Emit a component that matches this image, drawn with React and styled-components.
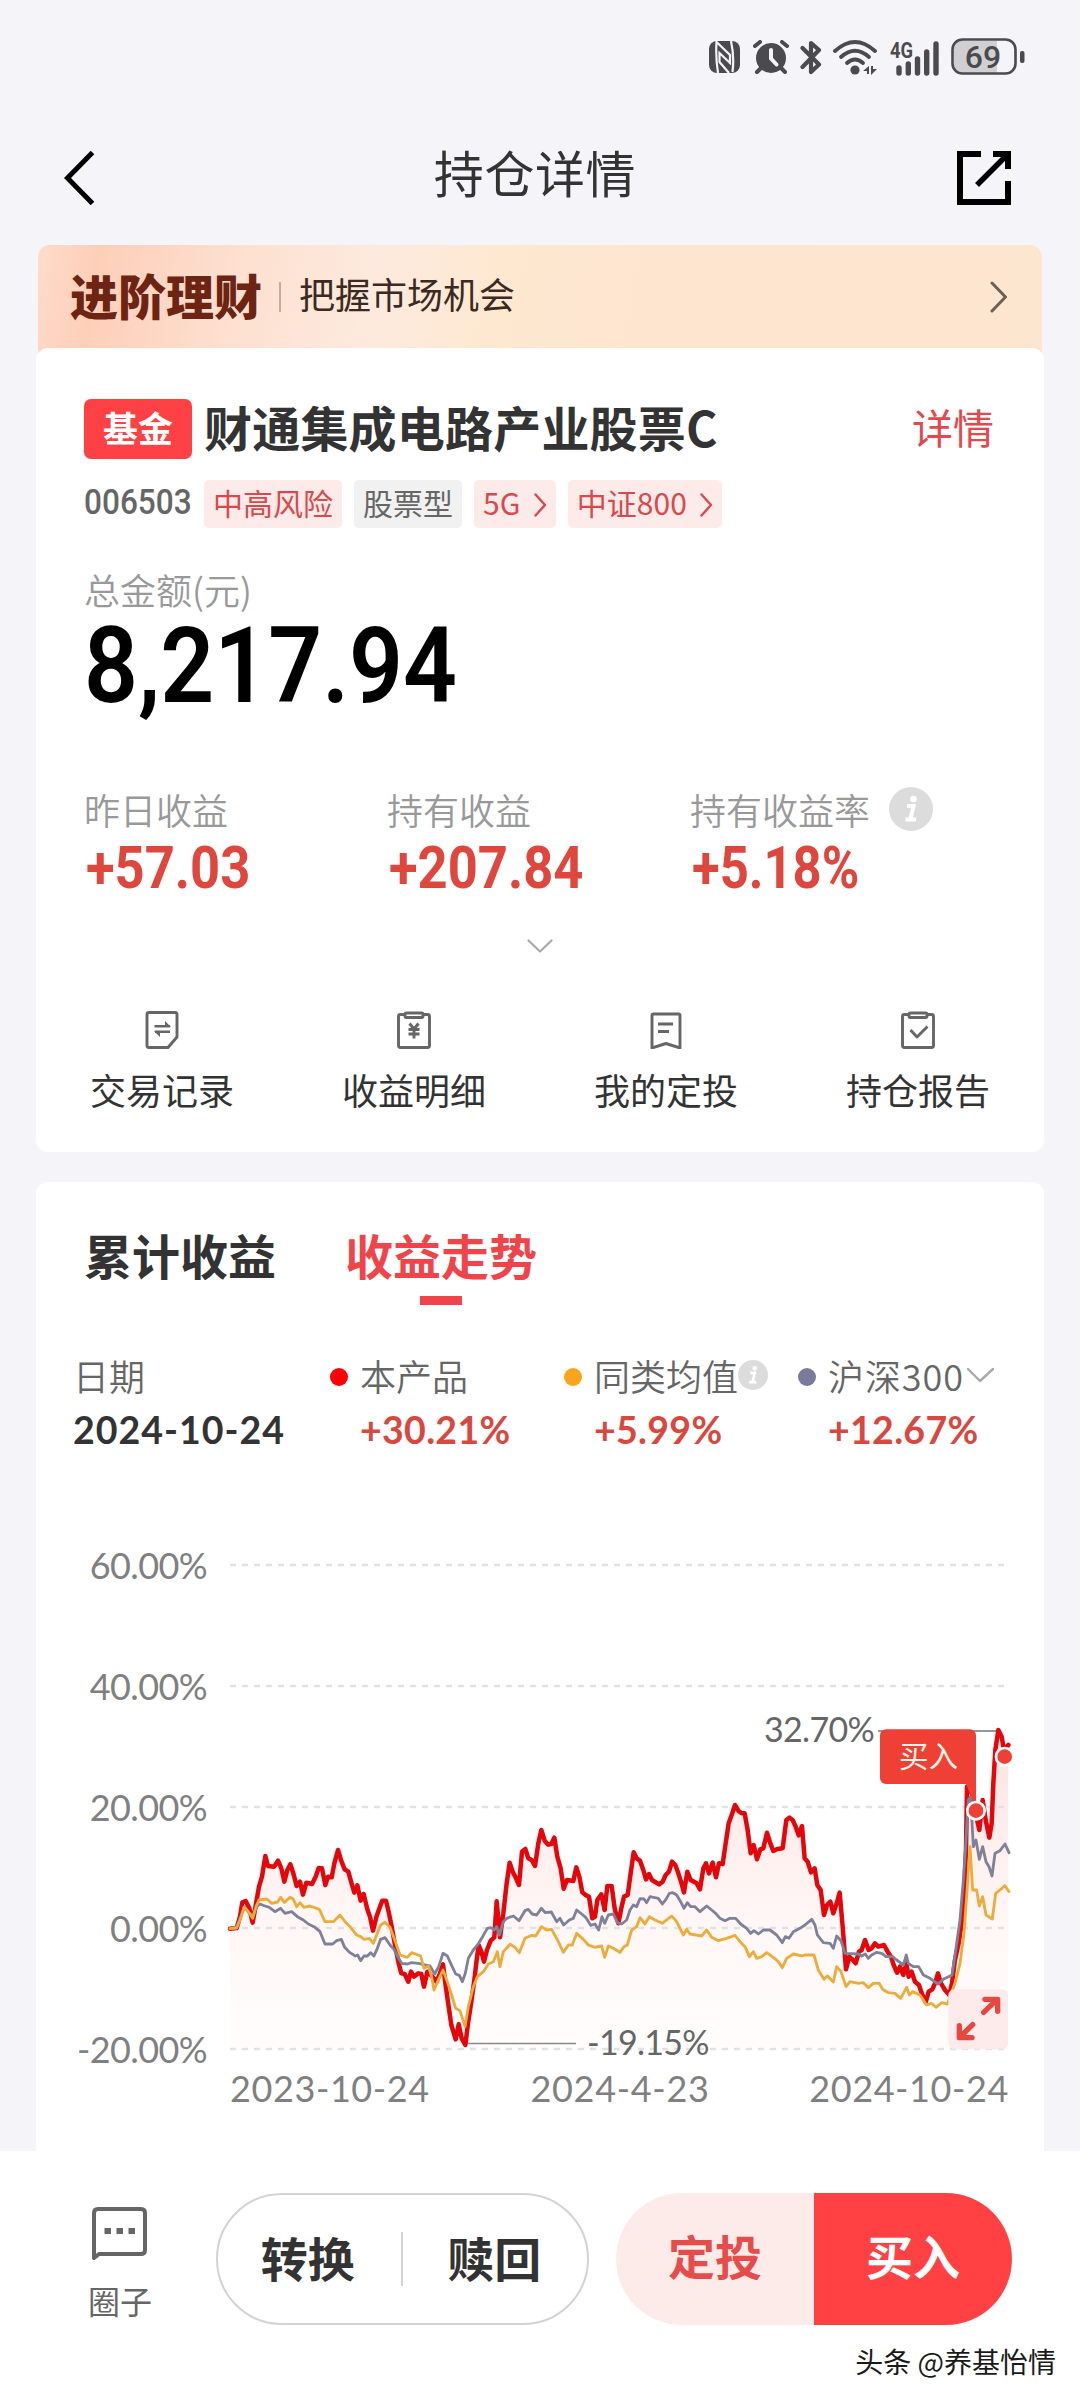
import React, { useState } from "react";
import styled, { createGlobalStyle } from "styled-components";

const RED_LINE =
  "60,686 80,684 90,650 97,607 107,603 118,625 128,668 140,600 147,560 156,530 166,468 174,498 192,500 204,482 214,505 223,545 232,510 241,493 250,520 260,558 270,545 279,584 289,548 306,552 317,530 326,504 336,505 346,555 354,530 365,532 373,490 384,450 393,480 404,508 415,515 424,548 433,578 442,556 452,602 461,582 472,628 480,650 489,692 500,648 510,620 517,602 528,602 537,640 545,680 556,740 566,790 574,820 584,822 595,845 603,815 612,830 625,820 634,822 642,860 652,815 665,828 680,845 690,820 699,793 706,850 716,920 724,975 737,1018 746,973 755,1015 766,1035 774,970 784,905 793,840 800,780 806,735 814,755 822,785 831,750 842,722 853,712 860,604 870,712 880,640 890,550 899,488 908,515 918,535 927,555 936,455 946,447 955,475 965,480 975,498 985,430 994,390 1004,422 1014,434 1024,432 1033,413 1042,470 1052,505 1061,566 1071,540 1090,543 1099,502 1108,530 1117,577 1127,585 1137,590 1147,655 1155,650 1162,600 1174,583 1184,630 1192,558 1205,558 1214,625 1225,670 1235,620 1242,590 1253,585 1262,520 1271,457 1280,475 1290,482 1300,510 1308,538 1317,522 1326,540 1347,553 1358,545 1367,525 1377,515 1386,485 1396,495 1405,520 1413,545 1422,577 1432,515 1442,540 1460,550 1470,568 1480,505 1488,490 1497,520 1508,488 1518,532 1527,490 1538,492 1547,430 1556,370 1565,345 1575,315 1585,332 1595,340 1604,340 1613,390 1622,460 1631,435 1641,478 1651,448 1660,445 1671,398 1681,430 1690,453 1702,447 1718,445 1729,360 1738,353 1748,360 1757,380 1766,406 1776,378 1784,475 1793,485 1803,517 1814,505 1822,555 1832,570 1842,645 1851,615 1861,605 1870,640 1880,610 1889,578 1898,680 1908,808 1918,770 1927,778 1937,790 1947,755 1955,750 1965,720 1976,750 1985,745 1995,730 2005,740 2022,735 2033,755 2043,770 2051,795 2061,818 2070,800 2080,825 2089,790 2096,830 2105,815 2115,845 2127,855 2137,885 2147,907 2156,875 2167,868 2175,850 2184,820 2193,850 2205,870 2218,885 2226,850 2235,780 2246,730 2255,670 2263,570 2268,450 2271,260 2280,270 2290,290 2297,340 2308,390 2318,300 2327,360 2338,413 2345,370 2350,250 2356,150 2365,90 2375,110 2382,150 2395,135";

const BLUE_LINE =
  "60,686 80,680 92,650 104,620 118,640 130,645 140,620 150,612 165,618 178,622 195,635 212,625 225,640 245,635 262,650 280,660 295,672 315,682 330,695 345,732 368,732 380,722 394,718 404,742 420,758 436,768 443,765 452,782 462,768 472,768 482,758 492,768 502,745 512,718 525,713 540,735 552,748 562,768 575,790 592,792 605,788 625,790 645,795 660,798 674,822 686,800 699,760 712,768 722,790 737,822 748,826 757,845 766,820 775,775 790,750 806,730 818,710 832,685 843,683 852,690 860,680 868,705 880,665 890,655 910,648 927,662 945,632 955,628 966,642 980,645 994,625 1006,638 1024,636 1040,665 1050,655 1061,675 1078,660 1090,655 1100,630 1115,642 1127,652 1142,676 1155,672 1166,690 1176,650 1184,670 1195,645 1210,642 1222,668 1235,672 1250,660 1260,630 1270,615 1280,620 1290,596 1302,597 1310,608 1320,590 1345,595 1357,612 1368,598 1378,580 1388,578 1400,585 1412,605 1422,625 1432,608 1442,620 1455,620 1470,635 1490,618 1505,630 1517,640 1530,655 1545,662 1560,655 1577,655 1592,672 1610,685 1622,700 1632,692 1645,702 1660,690 1680,690 1700,705 1717,728 1726,710 1737,715 1750,695 1770,685 1785,675 1805,658 1815,675 1822,705 1840,728 1860,730 1870,745 1880,708 1893,722 1905,760 1945,762 1955,768 1966,762 1975,775 1985,765 2000,757 2015,760 2028,770 2048,770 2060,780 2080,795 2089,765 2095,790 2110,800 2126,800 2140,825 2160,835 2184,852 2200,838 2226,825 2235,765 2250,660 2260,540 2268,420 2275,300 2282,290 2290,440 2298,420 2308,478 2318,440 2328,485 2337,500 2346,528 2355,460 2370,452 2385,432 2397,458";

const ORANGE_LINE =
  "60,686 80,684 92,655 102,622 115,635 128,655 138,620 147,600 170,597 185,610 203,606 212,592 223,607 240,592 250,598 260,620 270,608 282,622 300,618 328,628 345,665 370,665 390,645 405,665 420,680 440,705 452,710 462,718 478,715 490,730 502,700 512,675 525,667 540,682 555,722 570,765 592,772 605,758 632,768 642,805 655,798 665,830 672,870 685,840 699,810 712,845 725,885 737,925 750,932 765,980 775,920 790,860 802,830 820,815 835,792 850,785 862,755 870,800 880,755 900,733 915,742 928,758 945,715 965,706 977,708 994,680 1010,690 1025,688 1045,725 1060,757 1075,735 1087,735 1100,700 1120,718 1135,735 1155,742 1175,738 1184,772 1195,738 1210,745 1230,757 1242,740 1252,735 1265,690 1280,680 1290,653 1305,672 1318,650 1335,660 1357,670 1370,660 1385,648 1400,665 1420,705 1430,688 1440,702 1475,708 1490,690 1505,712 1525,722 1550,715 1575,706 1590,725 1605,740 1618,770 1630,755 1640,775 1655,770 1670,758 1690,772 1705,785 1717,803 1730,775 1750,762 1775,768 1785,765 1812,765 1825,810 1842,838 1852,828 1870,846 1880,800 1893,815 1908,860 1920,845 1945,850 1960,848 1975,863 1990,850 2008,850 2018,868 2035,878 2055,880 2072,895 2090,862 2098,885 2108,875 2130,885 2150,915 2165,910 2178,922 2195,908 2212,912 2235,850 2250,790 2262,700 2272,560 2280,440 2288,570 2300,570 2308,618 2318,590 2328,645 2347,657 2357,580 2370,570 2385,557 2397,575";

const GRID = [
  { label: "60.00%", y: 115 },
  { label: "40.00%", y: 236 },
  { label: "20.00%", y: 357 },
  { label: "0.00%", y: 478 },
  { label: "-20.00%", y: 599 },
];

const STATS = [
  { label: "昨日收益", value: "+57.03" },
  { label: "持有收益", value: "+207.84" },
  { label: "持有收益率", value: "+5.18%", info: true },
];

const LEGEND = [
  { name: "本产品", value: "+30.21%", color: "#fb0007" },
  { name: "同类均值", value: "+5.99%", color: "#fba41c", info: true },
  { name: "沪深300", value: "+12.67%", color: "#7a7a9c", arrow: true },
];

const TABS = ["累计收益", "收益走势"];

const NfcIcon = () => (
  <svg width="31" height="32" viewBox="0 0 31 32">
    <rect width="31" height="32" rx="8" fill="#4b4b4f" />
    <path
      d="M9 32 Q6.500 16 7.500 1 L21 14 V22 L10.500 12 V21 L20 32"
      fill="none"
      stroke="#f4f4f9"
      strokeWidth="2.200"
    />
    <path d="M22 0 Q25.500 16 23.500 31" fill="none" stroke="#f4f4f9" strokeWidth="2.200" />
  </svg>
);

const AlarmIcon = () => (
  <svg width="36" height="34" viewBox="0 0 36 34">
    <circle cx="18" cy="18" r="15" fill="#4b4b4f" />
    <path
      d="M2 6 L7 2 M34 6 L29 2 M8 28 L4 32 M28 28 L32 32"
      stroke="#4b4b4f"
      strokeWidth="4"
      strokeLinecap="round"
    />
    <path
      d="M18 10 V18.500 L23.500 24.500"
      fill="none"
      stroke="#f4f4f9"
      strokeWidth="4"
      strokeLinecap="round"
    />
  </svg>
);

const BluetoothIcon = () => (
  <svg width="22" height="35" viewBox="0 0 22 35">
    <path
      d="M2.500 8 L19 24.500 L11 32 V3 L19 10 L2.500 27"
      fill="none"
      stroke="#4b4b4f"
      strokeWidth="4.200"
      strokeLinecap="round"
      strokeLinejoin="round"
    />
  </svg>
);

const WifiIcon = () => (
  <svg width="45" height="35" viewBox="0 0 45 35">
    <g fill="none" stroke="#4b4b4f" strokeWidth="3.800" strokeLinecap="round">
      <path d="M2 11 Q22 -7 42 11" />
      <path d="M8 17 Q22 4.500 36 17" />
      <path d="M14 23 Q22 16 30 23" />
    </g>
    <circle cx="22" cy="30" r="4.600" fill="#4b4b4f" />
    <path d="M30 31 L36 26 V34 H34 V31 Z M38 26 V35 L44 29 H40 V26 Z" fill="#4b4b4f" />
  </svg>
);

const SignalIcon = () => (
  <svg width="51" height="42" viewBox="0 -5 51 42">
    <StatusText x="1" y="17" fontSize="22" fontWeight="700" textLength="23" lengthAdjust="spacingAndGlyphs">
      4G
    </StatusText>
    <path
      d="M10 27 V32 M19.300 23 V32 M28.500 18 V32 M37.700 11 V32 M47 3 V32"
      stroke="#4b4b4f"
      strokeWidth="5.400"
      strokeLinecap="round"
    />
  </svg>
);

const BatteryIcon = () => (
  <svg width="74" height="38" viewBox="0 0 74 38">
    <path d="M10 3 H46 V35 H10 Q3 35 3 27 V11 Q3 3 10 3 Z" fill="#d0d0d3" />
    <rect
      x="1.500"
      y="1.500"
      width="63"
      height="34"
      rx="10"
      fill="none"
      stroke="#4b4b4f"
      strokeWidth="2.600"
    />
    <rect x="69" y="13" width="4.500" height="12" rx="2" fill="#4b4b4f" />
    <StatusText x="32" y="29.500" textAnchor="middle" fontSize="32" fontWeight="500">
      69
    </StatusText>
  </svg>
);

const BackIcon = () => (
  <svg width="32" height="54" viewBox="0 0 32 54">
    <path d="M28.500 1.500 L3.500 27 L28.500 52.500" fill="none" stroke="#000" strokeWidth="5" />
  </svg>
);

const ShareIcon = () => (
  <svg width="54" height="54" viewBox="0 0 54 54">
    <g fill="none" stroke="#000" strokeWidth="6">
      <path d="M24 3 H3 V51 H51 V30" />
      <path d="M36 3 H51 V18" />
      <path d="M50 4 L20 34" strokeWidth="5.500" />
    </g>
  </svg>
);

const Chevron = ({ width, height, color, stroke, d }) => (
  <svg width={width} height={height} viewBox={`0 0 ${width} ${height}`}>
    <path
      d={d}
      fill="none"
      stroke={color}
      strokeWidth={stroke}
      strokeLinecap="round"
      strokeLinejoin="round"
    />
  </svg>
);

const TagArrow = () => (
  <Chevron width={13} height={24} color="#d9494b" stroke={2.4} d="M1.500 1.500 L11 12 L1.500 22.500" />
);

const RecordIcon = () => (
  <svg width="34" height="38" viewBox="0 0 34 38">
    <path
      d="M4 1.500 H30 Q32 1.500 32 3.500 V26 L23 36.500 H4 Q2 36.500 2 34.500 V3.500 Q2 1.500 4 1.500 Z"
      fill="none"
      stroke="#666"
      strokeWidth="2.900"
      strokeLinejoin="round"
    />
    <path d="M9.500 15.200 H25 M10 20.800 H25" stroke="#666" strokeWidth="2.600" />
    <path d="M20 10 L26 16 H20 Z M15 26 L9 20 H15 Z" fill="#666" />
  </svg>
);

const ClipboardIcon = ({ children }) => (
  <svg width="34" height="38" viewBox="0 0 34 38">
    <g fill="none" stroke="#666" strokeWidth="2.900" strokeLinejoin="round">
      <path d="M8 3.500 H3.500 Q1.500 3.500 1.500 5.500 V34.500 Q1.500 36.500 3.500 36.500 H30.500 Q32.500 36.500 32.500 34.500 V5.500 Q32.500 3.500 30.500 3.500 H26" />
      <rect x="8" y="2" width="18" height="4.500" rx="1.500" />
      {children}
    </g>
  </svg>
);

const PlanIcon = () => (
  <svg width="34" height="38" viewBox="0 0 34 38">
    <g fill="none" stroke="#666" strokeWidth="2.900" strokeLinejoin="round">
      <path d="M4.500 3 H29.500 Q31 3 31 4.500 V37 L17 32.500 L3 37 V4.500 Q3 3 4.500 3 Z" />
      <path d="M9 13 H24 M9 20.500 H20" />
    </g>
  </svg>
);

const ACTIONS = [
  { label: "交易记录", icon: <RecordIcon /> },
  {
    label: "收益明细",
    icon: (
      <ClipboardIcon>
        <path d="M12.500 12.500 L17 18 L21.500 12.500 M17 18 V27.500 M11.500 18.500 H22.500 M11.500 23 H22.500" />
      </ClipboardIcon>
    ),
  },
  { label: "我的定投", icon: <PlanIcon /> },
  {
    label: "持仓报告",
    icon: (
      <ClipboardIcon>
        <path d="M9.500 19 L16 26 L26.500 15.500" />
      </ClipboardIcon>
    ),
  },
];

const ChatIcon = () => (
  <svg width="56" height="54" viewBox="0 0 56 54">
    <path
      d="M2 51 V6 Q2 2 6 2 H49 Q53 2 53 6 V43 Q53 47 49 47 H7 Z"
      fill="none"
      stroke="#666"
      strokeWidth="4"
      strokeLinejoin="round"
    />
    <path d="M12.500 24 H19 M24.500 24 H31 M36.500 24 H43" stroke="#666" strokeWidth="6" />
  </svg>
);

const InfoIcon = ({ size }) => (
  <svg width={size} height={size} viewBox="0 0 44 44">
    <circle cx="22" cy="22" r="22" fill="#dcdcdc" />
    <circle cx="24.500" cy="12" r="3.300" fill="#fff" />
    <path
      d="M18 19 H24.500 L21.500 32 M16.500 32.500 H27"
      fill="none"
      stroke="#fff"
      strokeWidth="4"
    />
  </svg>
);

const TrendChart = () => (
  <ChartSvg viewBox="0 0 1008 701">
    <defs>
      <linearGradient id="area" x1="0" y1="0" x2="0" y2="1">
        <stop offset="0" stopColor="#fde3e1" />
        <stop offset="0.6" stopColor="#fff7f6" />
        <stop offset="1" stopColor="#fffdfc" />
      </linearGradient>
    </defs>
    <g transform="translate(174 250) scale(0.33333)">
      <polygon points={`60,1048 ${RED_LINE} 2395,1048`} fill="url(#area)" />
    </g>
    {GRID.map((line) => (
      <g key={line.label}>
        <line
          x1="194"
          x2="968"
          y1={line.y}
          y2={line.y}
          stroke="#e3e2e2"
          strokeWidth="2.400"
          strokeDasharray="6 6"
        />
        <AxisText $spacing={-0.6} x="171" y={line.y + 13.5} textAnchor="end">
          {line.label}
        </AxisText>
      </g>
    ))}
    <line x1="430" x2="540" y1="593.500" y2="593.500" stroke="#888" strokeWidth="1.300" />
    <line x1="842" x2="962" y1="281" y2="281" stroke="#777" strokeWidth="1.300" />
    <g
      transform="translate(174 250) scale(0.33333)"
      fill="none"
      strokeLinejoin="round"
      strokeLinecap="round"
    >
      <polyline points={RED_LINE} stroke="#e3060b" strokeWidth="13.500" />
      <polyline points={BLUE_LINE} stroke="#7f8199" strokeWidth="8.500" />
      <polyline points={ORANGE_LINE} stroke="#ebac3c" strokeWidth="8.500" />
      <rect x="2010" y="88" width="288" height="164" rx="18" fill="#ef4036" />
      <path d="M2266 245 L2298 332 V230 Z" fill="#ef4036" />
      <circle cx="2298" cy="332" r="26" fill="#ef4036" stroke="#fff" strokeWidth="8" />
      <circle cx="2384" cy="170" r="26" fill="#ef4036" stroke="#fff" strokeWidth="8" />
      <rect x="2215" y="868" width="179" height="180" rx="18" fill="#fdeaea" fillOpacity="0.94" />
      <g stroke="#e6473f" strokeWidth="16">
        <path d="M2321 937 L2361 899 M2325 898 H2363 V934" />
        <path d="M2288 974 L2249 1012 M2248 977 V1013 H2286" />
      </g>
    </g>
    <FlagText x="863" y="317">
      买入
    </FlagText>
    <MarkText x="838" y="292" textAnchor="end">
      32.70%
    </MarkText>
    <MarkText x="551" y="605">
      -19.15%
    </MarkText>
    <AxisText $spacing={0.6} x="194" y="652">
      2023-10-24
    </AxisText>
    <AxisText $spacing={0.7} x="584" y="652" textAnchor="middle">
      2024-4-23
    </AxisText>
    <AxisText $spacing={0.6} x="973" y="652" textAnchor="end">
      2024-10-24
    </AxisText>
  </ChartSvg>
);

export default function App() {
  const [activeTab, setActiveTab] = useState(1);

  return (
    <>
      <GlobalStyle />
      <Page>
        <StatusBar>
          <StatusPair>
            <NfcIcon />
            <AlarmIcon />
          </StatusPair>
          <BluetoothIcon />
          <WifiIcon />
          <SignalIcon />
          <BatteryIcon />
        </StatusBar>
        <Header>
          <BackIcon />
          <HeaderTitle>持仓详情</HeaderTitle>
          <ShareIcon />
        </Header>
        <Banner>
          <BannerTitle>进阶理财</BannerTitle>
          <BannerDivider />
          <BannerText>把握市场机会</BannerText>
          <Chevron width={18} height={32} color="#6d5f56" stroke={3} d="M2 2 L15.500 16 L2 30" />
        </Banner>

        <HoldingCard>
          <FundRow>
            <FundBadge>基金</FundBadge>
            <FundName>财通集成电路产业股票C</FundName>
            <DetailLink>详情</DetailLink>
          </FundRow>
          <TagRow>
            <FundCode>006503</FundCode>
            <Tag>中高风险</Tag>
            <Tag $gray>股票型</Tag>
            <Tag>
              5G
              <TagArrow />
            </Tag>
            <Tag>
              中证800
              <TagArrow />
            </Tag>
          </TagRow>
          <GrayLabel $top={37}>总金额(元)</GrayLabel>
          <Amount>8,217.94</Amount>
          <StatGrid>
            {STATS.map((stat) => (
              <div key={stat.label}>
                <GrayLabel>
                  {stat.label}
                  {stat.info && <InfoIcon size={44} />}
                </GrayLabel>
                <StatValue $tight={stat.info}>{stat.value}</StatValue>
              </div>
            ))}
          </StatGrid>
          <ExpandRow>
            <Chevron width={26} height={14} color="#aaa" stroke={2.2} d="M1.500 1.500 L13 12.500 L24.500 1.500" />
          </ExpandRow>
          <ActionGrid>
            {ACTIONS.map((action) => (
              <Action key={action.label}>
                {action.icon}
                {action.label}
              </Action>
            ))}
          </ActionGrid>
        </HoldingCard>

        <TrendCard>
          <TabRow>
            {TABS.map((tab, index) => (
              <Tab
                key={tab}
                $active={activeTab === index}
                onClick={() => setActiveTab(index)}
              >
                {tab}
              </Tab>
            ))}
          </TabRow>
          <LegendGrid>
            <div>
              <LegendName>日期</LegendName>
              <LegendDate>2024-10-24</LegendDate>
            </div>
            {LEGEND.map((item) => (
              <div key={item.name}>
                <LegendName $wide={item.arrow}>
                  <Dot $color={item.color} />
                  {item.name}
                  {item.info && <InfoIcon size={30} />}
                  {item.arrow && (
                    <Chevron width={30} height={16} color="#aaa" stroke={2.4} d="M4 2 L16 14 L29 2" />
                  )}
                </LegendName>
                <LegendValue>{item.value}</LegendValue>
              </div>
            ))}
          </LegendGrid>
          <TrendChart />
        </TrendCard>

        <BottomBar>
          <Community>
            <ChatIcon />
            圈子
          </Community>
          <OutlineGroup>
            <OutlineButton>转换</OutlineButton>
            <ButtonDivider />
            <OutlineButton>赎回</OutlineButton>
          </OutlineGroup>
          <SolidGroup>
            <PlanButton>定投</PlanButton>
            <BuyButton>买入</BuyButton>
          </SolidGroup>
          <Watermark>头条 @养基怡情</Watermark>
        </BottomBar>
      </Page>
    </>
  );
}

const GlobalStyle = createGlobalStyle`
  * {
    box-sizing: border-box;
  }
  body {
    margin: 0;
    background-color: #f4f4f9;
    font-family: "Noto Sans CJK SC", sans-serif;
  }
  svg {
    display: block;
    flex-shrink: 0;
  }
  button {
    padding: 0;
    border: none;
    background: none;
    font-family: inherit;
    cursor: pointer;
  }
`;

const Page = styled.div`
  display: flex;
  flex-direction: column;
  width: 1080px;
  height: 2400px;
  overflow: hidden;
  background-color: #f4f4f9;
`;

const StatusBar = styled.div`
  display: flex;
  justify-content: flex-end;
  align-items: center;
  gap: 11px;
  height: 114px;
  padding-right: 55px;
`;

const StatusPair = styled.div`
  display: flex;
  align-items: center;
  gap: 13px;
`;

const StatusText = styled.text`
  font-family: Roboto, sans-serif;
  fill: #4b4b4f;
`;

const Header = styled.header`
  display: flex;
  justify-content: space-between;
  align-items: center;
  height: 131px;
  padding: 0 69px 4px 64px;
`;

const HeaderTitle = styled.h1`
  margin: 0 0 14px 17px;
  font-size: 50px;
  line-height: 60px;
  font-weight: 400;
  letter-spacing: 0.600px;
  color: #333;
`;

const Banner = styled.div`
  display: flex;
  align-items: center;
  height: 115px;
  margin: 0 38px;
  padding: 0 34px 12px 32px;
  border-radius: 12px 12px 0 0;
  background: linear-gradient(
    100deg,
    #fedccb 0%,
    #fdcfb9 6%,
    #fde0d0 20%,
    #fdeade 34%,
    #fee8d0 46%,
    #fde5cf 60%,
    #fde6d0 100%
  );

  svg {
    margin-left: auto;
  }
`;

const BannerTitle = styled.span`
  margin-bottom: 5px;
  font-size: 48px;
  line-height: 56px;
  font-weight: 900;
  color: #6d2412;
`;

const BannerDivider = styled.span`
  width: 2px;
  height: 30px;
  margin: 0 18px 0 17px;
  background-color: #c9a998;
`;

const BannerText = styled.span`
  margin-bottom: 7px;
  font-size: 36px;
  line-height: 48px;
  color: #3b2a22;
`;

const HoldingCard = styled.section`
  height: 804px;
  margin: -12px 36px 0;
  padding: 51px 48px 0;
  border-radius: 12px;
  background-color: white;
`;

const FundRow = styled.div`
  display: flex;
  align-items: center;
  height: 60px;
`;

const FundBadge = styled.span`
  width: 108px;
  height: 60px;
  border-radius: 7px;
  background-color: #fe4144;
  color: white;
  font-size: 35px;
  line-height: 56px;
  font-weight: 700;
  text-align: center;
`;

const FundName = styled.h2`
  margin: 0 0 6px 12px;
  font-size: 48px;
  line-height: 58px;
  font-weight: 700;
  letter-spacing: 0.200px;
  color: #333;
`;

const DetailLink = styled.span`
  margin: 0 2px 6px auto;
  font-size: 41px;
  line-height: 48px;
  color: #e5484b;
`;

const TagRow = styled.div`
  display: flex;
  align-items: center;
  gap: 12px;
  height: 48px;
  margin-top: 21px;
`;

const FundCode = styled.span`
  width: 108px;
  margin-bottom: 4px;
  font-family: Roboto, sans-serif;
  font-size: 35.500px;
  line-height: 44px;
  font-weight: 500;
  color: #666;
  transform: scaleX(0.89);
  transform-origin: left;
`;

const Tag = styled.span`
  display: flex;
  align-items: center;
  height: 48px;
  padding: 0 9px 4px;
  border-radius: 5px;
  background-color: ${(props) => (props.$gray ? "#f1f1f1" : "#fdebea")};
  color: ${(props) => (props.$gray ? "#666" : "#d9494b")};
  font-size: 30px;
  line-height: 44px;

  svg {
    margin: 5px 0 0 13.500px;
  }
`;

const GrayLabel = styled.div`
  display: flex;
  align-items: center;
  gap: 19px;
  height: 48px;
  margin-top: ${(props) => props.$top || 0}px;
  font-size: 36px;
  line-height: 48px;
  font-weight: 350;
  color: #999;
  white-space: nowrap;
`;

const Amount = styled.div`
  width: max-content;
  font-family: Roboto, sans-serif;
  font-size: 105px;
  line-height: 108px;
  font-weight: 600;
  color: #000;
  transform: scaleX(0.9);
  transform-origin: left;
`;

const StatGrid = styled.div`
  display: grid;
  grid-template-columns: 303px 303px 1fr;
  margin-top: 64px;
`;

const StatValue = styled.div`
  width: max-content;
  margin: 5px 0 0 2px;
  font-family: Roboto, sans-serif;
  font-size: 59px;
  line-height: 60px;
  font-weight: 700;
  color: #dd473d;
  transform: scaleX(${(props) => (props.$tight ? 0.86 : 0.89)});
  transform-origin: left;
`;

const ExpandRow = styled.div`
  display: flex;
  justify-content: center;
  height: 14px;
  margin-top: 41px;
`;

const ActionGrid = styled.div`
  display: grid;
  grid-template-columns: repeat(4, 1fr);
  margin: 58px -48px 0;
`;

const Action = styled.div`
  display: flex;
  flex-direction: column;
  align-items: center;
  gap: 16px;
  font-size: 36px;
  line-height: 48px;
  color: #333;
`;

const TrendCard = styled.section`
  height: 969px;
  margin: 30px 36px 0;
  padding-top: 42px;
  border-radius: 12px 12px 0 0;
  background-color: white;
`;

const TabRow = styled.div`
  display: flex;
  gap: 69px;
  padding-left: 48px;
`;

const Tab = styled.button`
  display: flex;
  flex-direction: column;
  align-items: center;
  height: 81px;
  font-size: 48px;
  line-height: 60px;
  font-weight: 700;
  color: ${(props) => (props.$active ? "#ef454a" : "#333")};

  &::after {
    content: "";
    width: 42px;
    height: 9px;
    margin-top: 12px;
    background-color: ${(props) => (props.$active ? "#ef454a" : "transparent")};
  }
`;

const LegendGrid = styled.div`
  display: grid;
  grid-template-columns: 257px 234px 234px 1fr;
  margin-top: 48px;
  padding-left: 37px;
`;

const LegendName = styled.div`
  display: flex;
  align-items: center;
  height: 44px;
  font-size: 36px;
  line-height: 44px;
  font-weight: 350;
  letter-spacing: ${(props) => (props.$wide ? "0.900px" : "0")};
  color: #666;
  white-space: nowrap;
`;

const Dot = styled.span`
  width: 18px;
  height: 18px;
  margin: 3px 12px 0 0;
  border-radius: 50%;
  background-color: ${(props) => props.$color};
`;

const LegendDate = styled.div`
  margin-top: 13px;
  font-family: Lato, sans-serif;
  font-size: 37.500px;
  line-height: 40px;
  font-weight: 700;
  letter-spacing: 1px;
  color: #333;
`;

const LegendValue = styled(LegendDate)`
  padding-left: 30px;
  letter-spacing: 0.300px;
  color: #d8483f;
`;

const ChartSvg = styled.svg`
  width: 1008px;
  height: 701px;
`;

const AxisText = styled.text`
  font-family: Lato, sans-serif;
  font-size: 36px;
  letter-spacing: ${(props) => props.$spacing}px;
  fill: #808080;
`;

const MarkText = styled.text`
  font-family: Lato, sans-serif;
  font-size: 34px;
  letter-spacing: -0.700px;
  fill: #666;
`;

const FlagText = styled.text`
  font-family: "Noto Sans CJK SC", sans-serif;
  font-size: 29.500px;
  fill: #fff5e8;
`;

const BottomBar = styled.footer`
  position: relative;
  display: flex;
  align-items: flex-start;
  height: 249px;
  padding: 42px 68px 0 88px;
  background-color: white;
`;

const Community = styled.div`
  display: flex;
  flex-direction: column;
  align-items: center;
  gap: 17px;
  width: 64px;
  margin-top: 14px;
  font-size: 32px;
  line-height: 44px;
  color: #666;
`;

const OutlineGroup = styled.div`
  display: flex;
  align-items: center;
  width: 373px;
  height: 132px;
  margin-left: 64px;
  border: 2px solid #d3d3d3;
  border-radius: 66px;
`;

const OutlineButton = styled.button`
  flex: 1;
  height: 100%;
  padding: 0 3px 6px 0;
  font-size: 47px;
  font-weight: 700;
  color: #333;
`;

const ButtonDivider = styled.span`
  width: 2px;
  height: 54px;
  margin-right: 2px;
  background-color: #d3d3d3;
`;

const SolidGroup = styled.div`
  display: flex;
  width: 396px;
  height: 132px;
  margin-left: 27px;
  border-radius: 66px;
  overflow: hidden;
`;

const PlanButton = styled.button`
  flex: 1;
  padding-bottom: 10px;
  background-color: #fdebea;
  color: #e64c4c;
  font-size: 47px;
  font-weight: 700;
`;

const BuyButton = styled(PlanButton)`
  background-color: #ff4144;
  color: white;
`;

const Watermark = styled.span`
  position: absolute;
  right: 24px;
  bottom: 19px;
  font-size: 28px;
  line-height: 40px;
  color: #1a1a1a;
`;
